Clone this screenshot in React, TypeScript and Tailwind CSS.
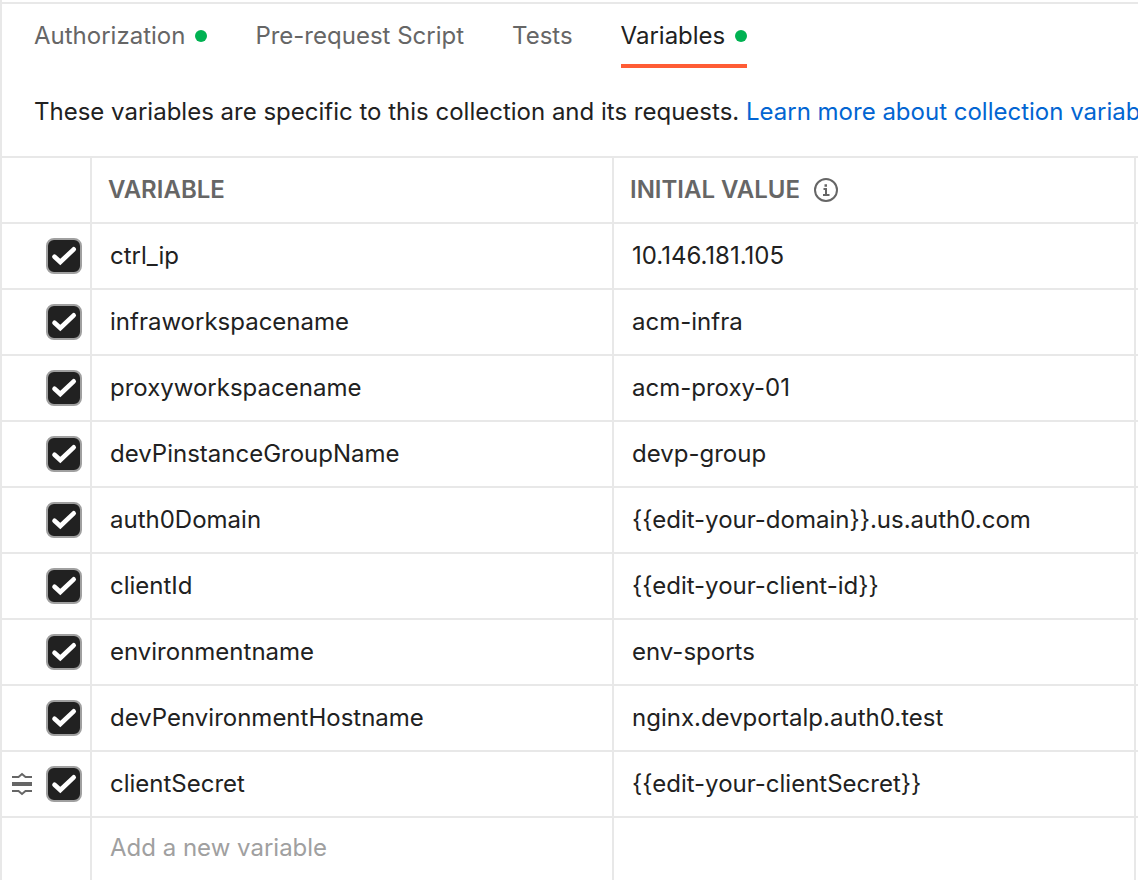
import React from "react";

const tabs = [
  { label: "Authorization", dot: true, active: false },
  { label: "Pre-request Script", dot: false, active: false },
  { label: "Tests", dot: false, active: false },
  { label: "Variables", dot: true, active: true },
];

const variables = [
  { name: "ctrl_ip", value: "10.146.181.105" },
  { name: "infraworkspacename", value: "acm-infra" },
  { name: "proxyworkspacename", value: "acm-proxy-01" },
  { name: "devPinstanceGroupName", value: "devp-group" },
  { name: "auth0Domain", value: "{{edit-your-domain}}.us.auth0.com" },
  { name: "clientId", value: "{{edit-your-client-id}}" },
  { name: "environmentname", value: "env-sports" },
  { name: "devPenvironmentHostname", value: "nginx.devportalp.auth0.test" },
  { name: "clientSecret", value: "{{edit-your-clientSecret}}", handle: true },
];

function DragHandle() {
  return (
    <svg width="20" height="24" viewBox="0 0 20 24" fill="none" stroke="#666666" strokeWidth="2" aria-hidden="true">
      <path d="M0 5h6.5L10 2l3.5 3H20M0 19h6.5L10 22l3.5-3H20" />
      <path d="M0 12h20" strokeWidth="4" />
    </svg>
  );
}

function InfoIcon() {
  return (
    <svg width="24" height="24" viewBox="0 0 24 24" fill="none" stroke="#666666" strokeWidth="2" aria-hidden="true">
      <circle cx="12" cy="12" r="11" />
      <path d="M9.5 11H12v6M9 17h6.5" />
      <path d="M10.5 7.5h2.5" strokeWidth="2.5" />
    </svg>
  );
}

function Check({ label }: { label: string }) {
  return (
    <span className="grid size-9 shrink-0">
      <input
        type="checkbox"
        defaultChecked
        aria-label={`Enable ${label}`}
        className="peer col-start-1 row-start-1 size-9 appearance-none rounded-lg border-2 border-[#a0a0a0] bg-white checked:bg-[#212121]"
      />
      <svg
        viewBox="0 0 36 36"
        fill="none"
        stroke="white"
        strokeWidth="4.6"
        strokeLinecap="round"
        className="pointer-events-none invisible col-start-1 row-start-1 size-9 peer-checked:visible"
        aria-hidden="true"
      >
        <path d="M8.5 18.7L14.3 24L27.7 11.3" />
      </svg>
    </span>
  );
}

export default function App() {
  return (
    <main className="min-h-screen overflow-hidden border-l-2 border-[#e8e8e8] bg-white pt-0.5 font-['Inter',sans-serif] text-2xl text-[#212121]">
      <nav className="flex gap-12 border-t-2 border-[#e8e8e8] pl-8">
        {tabs.map((tab) => (
          <button
            key={tab.label}
            type="button"
            className={
              tab.active
                ? "flex h-16 items-center gap-2.5 border-b-4 border-[#ff5c35] pt-1 whitespace-nowrap"
                : "flex h-16 items-center gap-2.5 border-b-4 border-transparent pt-1 whitespace-nowrap text-[#666666]"
            }
          >
            {tab.label}
            {tab.dot && <span className="size-3 rounded-full bg-[#00b252]" />}
          </button>
        ))}
      </nav>
      <p className="py-7 pl-8 whitespace-nowrap">
        These variables are specific to this collection and its requests.{" "}
        <a href="#variables" className="text-[#0265d2]">
          Learn more about collection variables
        </a>
      </p>
      <table className="w-full table-fixed border-collapse border-t-2 border-[#e8e8e8]">
        <colgroup>
          <col className="w-[89px]" />
          <col />
          <col />
          <col className="w-[3px]" />
        </colgroup>
        <thead>
          <tr className="h-[66px] border-b-2 border-[#e8e8e8] text-left text-[#666666]">
            <td className="border-r-2 border-[#e8e8e8]" />
            <th scope="col" className="border-r-2 border-[#e8e8e8] pl-4 font-semibold">VARIABLE</th>
            <th scope="col" className="border-r-2 border-[#e8e8e8] pl-4 font-semibold">
              <span className="flex items-center gap-3.5">
                INITIAL VALUE
                <InfoIcon />
              </span>
            </th>
            <td />
          </tr>
        </thead>
        <tbody>
          {variables.map((row) => (
            <tr key={row.name} className="h-[66px] border-b-2 border-[#e8e8e8]">
              <td className="border-r-2 border-[#e8e8e8] pr-2">
                <span className="flex items-center justify-end gap-3.5">
                  {row.handle && <DragHandle />}
                  <Check label={row.name} />
                </span>
              </td>
              <td className="border-r-2 border-[#e8e8e8] pl-[18px]">{row.name}</td>
              <td className="border-r-2 border-[#e8e8e8] pl-[18px]">{row.value}</td>
              <td />
            </tr>
          ))}
          <tr className="h-16">
            <td className="border-r-2 border-[#e8e8e8]" />
            <td className="border-r-2 border-[#e8e8e8] pt-3.5 pl-[18px] align-top">
              <input
                type="text"
                aria-label="Add a new variable"
                placeholder="Add a new variable"
                className="block w-full outline-none placeholder:text-[#a0a0a0]"
              />
            </td>
            <td className="border-r-2 border-[#e8e8e8]" />
            <td />
          </tr>
        </tbody>
      </table>
    </main>
  );
}
